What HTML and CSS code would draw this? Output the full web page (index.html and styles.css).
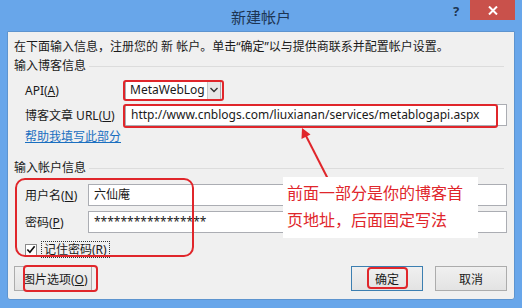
FILE: index.html
```html
<!DOCTYPE html>
<html lang="zh-CN">
<head>
  <meta charset="UTF-8">
  <title>新建帐户</title>
  <link rel="stylesheet" href="styles.css">
</head>
<body>
  <div class="window">
    <div class="titlebar">
      <span class="title">新建帐户</span>
      <span class="help">?</span>
      <span class="close">
        <svg width="10" height="9" viewBox="0 0 10 9"><path d="M1 0.5 L9 8.5 M9 0.5 L1 8.5" stroke="#fff" stroke-width="2"/></svg>
      </span>
    </div>
    <div class="client">
      <p class="intro">在下面输入信息，注册您的 新 帐户。单击“确定”以与提供商联系并配置帐户设置。</p>

      <div class="group-title">输入博客信息</div>
      <div class="row blog-row">
        <span class="label">API(<u>A</u>)</span>
        <div class="combo">
          <span class="combo-text">MetaWebLog</span>
          <span class="combo-btn">
            <svg width="8" height="6" viewBox="0 0 8 6"><path d="M0.5 1 L4 4.5 L7.5 1" stroke="#333" stroke-width="1.4" fill="none"/></svg>
          </span>
        </div>
      </div>
      <div class="row blog-row url-row">
        <span class="label">博客文章 URL(<u>U</u>)</span>
        <div class="textbox">http://www.cnblogs.com/liuxianan/services/metablogapi.aspx</div>
      </div>
      <a class="help-link" href="#">帮助我填写此部分</a>

      <div class="group-title second">输入帐户信息</div>
      <div class="row account-row">
        <span class="label">用户名(<u>N</u>)</span>
        <div class="textbox">六仙庵</div>
      </div>
      <div class="row account-row pass-row">
        <span class="label">密码(<u>P</u>)</span>
        <div class="textbox">*****************</div>
      </div>
      <div class="check-row">
        <span class="checkbox">
          <svg width="11" height="11" viewBox="0 0 11 11"><path d="M1.5 5.5 L4.3 8.5 L9.5 1.8" stroke="#111" stroke-width="1.8" fill="none"/></svg>
        </span>
        <span class="focus-label">记住密码(<u>R</u>)</span>
      </div>

      <div class="buttons">
        <button class="btn btn-left">图片选项(<u>O</u>)</button>
        <button class="btn btn-default">确定</button>
        <button class="btn">取消</button>
      </div>

      <!-- annotations drawn over the dialog -->
      <div class="mark mark-combo"></div>
      <div class="mark mark-url"></div>
      <div class="mark mark-account"></div>
      <div class="mark mark-picture"></div>
      <div class="mark mark-ok"></div>
      <svg class="arrow" width="40" height="60" viewBox="0 0 40 60">
        <path d="M5 4 L30 53" stroke="#e0262b" stroke-width="2" fill="none"/>
        <path d="M4 2 L3.5 13 L12.5 8.5 Z" fill="#e0262b"/>
      </svg>
      <div class="note">前面一部分是你的博客首<br>页地址，后面固定写法</div>
    </div>
  </div>
</body>
</html>
```

FILE: styles.css
```css
body {
  margin: 0;
  padding: 0;
  font-family: "Noto Sans", "Noto Sans CJK SC", sans-serif;
  font-size: 12px;
  color: #1a1a1a;
}

.window {
  width: 522px;
  height: 308px;
  background-color: #68a6ea;
  padding: 0 7px 8px 7px;
  box-sizing: border-box;
  display: flex;
  flex-direction: column;
}

.titlebar {
  height: 31px;
  position: relative;
  display: flex;
  justify-content: center;
  align-items: center;
}

.title {
  font-size: 15px;
  color: #1d3553;
  margin-top: 1px;
}

.help {
  position: absolute;
  left: 446px;
  top: 2px;
  font-weight: bold;
  font-size: 13px;
  color: #1d3553;
}

.close {
  position: absolute;
  left: 463px;
  top: 0;
  width: 45px;
  height: 20px;
  background-color: #c9514b;
  display: flex;
  justify-content: center;
  align-items: center;
}

.client {
  flex: 1;
  position: relative;
  background-color: #f0f0f0;
  border: 1px solid #5d94cf;
  border-radius: 0 0 3px 3px;
  padding: 6px 7px 0 6px;
}

.intro {
  margin: 0;
  line-height: 18px;
}

.group-title {
  display: flex;
  align-items: center;
  line-height: 18px;
  margin-top: 1px;
}

.group-title::after {
  content: "";
  flex: 1;
  height: 1px;
  background-color: #dcdcdc;
  margin-left: 3px;
  margin-right: 3px;
}

.group-title.second {
  margin-top: 15px;
}

.row {
  display: flex;
  align-items: center;
}

.label {
  padding-left: 11px;
  flex-shrink: 0;
}

.blog-row .label {
  width: 100px;
}

.blog-row {
  margin-top: 5px;
}

.url-row {
  margin-top: 4px;
}

.combo {
  display: flex;
  width: 96px;
  height: 20px;
  background-color: #fff;
  border: 1px solid #abadb3;
  box-sizing: border-box;
}

.combo-text {
  flex: 1;
  padding-left: 4px;
  line-height: 18px;
}

.combo-btn {
  width: 12px;
  border-left: 1px solid #c8c8c8;
  background-color: #e8e8e8;
  display: flex;
  justify-content: center;
  align-items: center;
}

.textbox {
  flex: 1;
  height: 22px;
  line-height: 20px;
  background-color: #fff;
  border: 1px solid #abadb3;
  box-sizing: border-box;
  padding-left: 5px;
  white-space: nowrap;
}

.help-link {
  display: block;
  margin-left: 11px;
  margin-top: 3px;
  line-height: 15px;
  color: #1a6fc0;
  text-decoration: underline;
  width: max-content;
}

.account-row {
  margin-top: 7px;
}

.account-row .label {
  width: 63px;
}

.pass-row {
  margin-top: 5px;
}

.check-row {
  display: flex;
  align-items: center;
  margin-top: 8px;
  padding-left: 11px;
  height: 17px;
}

.checkbox {
  width: 12px;
  height: 12px;
  border: 1px solid #8a8a8a;
  background-color: #fff;
  box-sizing: border-box;
  display: flex;
  justify-content: center;
  align-items: center;
}

.focus-label {
  margin-left: 4px;
  padding: 0 2px;
  line-height: 15px;
  border: 1px dotted #333;
}

.buttons {
  display: flex;
  gap: 12px;
  margin-top: 8px;
}

.btn {
  height: 25px;
  width: 72px;
  font-family: inherit;
  font-size: 12px;
  color: #1a1a1a;
  background: linear-gradient(#f0f0f0, #e3e3e3);
  border: 1px solid #acacac;
  padding: 0;
}

.btn-left {
  width: 78px;
  margin-right: auto;
  text-align: left;
  padding-left: 8px;
}

.btn-default {
  border-color: #3c7fb1;
}

.mark {
  position: absolute;
  border: 2px solid #e0262b;
  border-radius: 3px;
  box-sizing: border-box;
}

.mark-combo {
  left: 115px;
  top: 48px;
  width: 101px;
  height: 21px;
}

.mark-url {
  left: 115px;
  top: 72px;
  width: 375px;
  height: 24px;
}

.mark-account {
  left: 7px;
  top: 146px;
  width: 179px;
  height: 79px;
  border-radius: 10px;
}

.mark-picture {
  left: 15px;
  top: 233px;
  width: 75px;
  height: 27px;
  border-radius: 4px;
}

.mark-ok {
  left: 359px;
  top: 235px;
  width: 41px;
  height: 22px;
  border-radius: 4px;
}

.arrow {
  position: absolute;
  left: 290px;
  top: 94px;
}

.note {
  position: absolute;
  left: 275px;
  top: 145px;
  width: 195px;
  height: 61px;
  box-sizing: border-box;
  background-color: #fff;
  color: #e0262b;
  font-size: 16px;
  line-height: 27px;
  padding: 3px 0 0 4px;
}
```
